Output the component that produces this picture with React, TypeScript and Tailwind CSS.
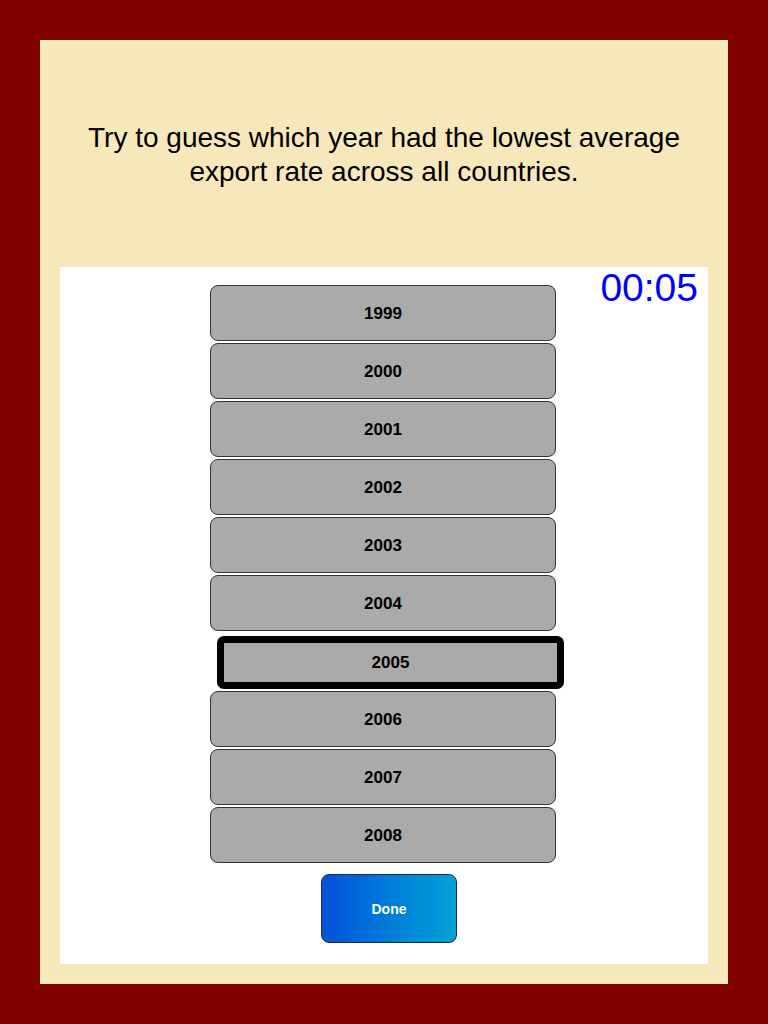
import React from "react";

const years = ["1999", "2000", "2001", "2002", "2003", "2004", "2005", "2006", "2007", "2008"];
const selected = "2005";

export default function App() {
	return (
		<div className="h-[1024px] w-[768px] bg-[#800000] p-[40px]" style={{fontFamily: '"Liberation Sans", Arial, sans-serif'}}>
			<div className="flex h-full flex-col bg-[#f7e8bc] px-[20px] pb-[20px]">
				<div className="flex h-[227px] items-center justify-center pt-[2px]">
					<p className="text-center text-[28px] leading-[34px] text-black">
						Try to guess which year had the lowest average<br/>export rate across all countries.
					</p>
				</div>

				<div className="relative flex flex-1 flex-col items-center bg-white pt-[18px]">
					<div className="absolute right-[10px] top-[-2px] text-[39px] leading-[46px] text-[#0000ff]">00:05</div>

					<div className="mr-[2px] flex w-[346px] flex-col gap-[2px]">
						{years.map((y) => y === selected ? (
							<div key={y}
								 className="ml-[7px] mt-[3px] flex h-[53px] w-[347px] items-center justify-center rounded-[7px] border-[7px] border-black bg-[#aaaaaa] text-[17px] font-bold text-black">
								{y}
							</div>
						) : (
							<div key={y}
								 className="flex h-[56px] items-center justify-center rounded-[8px] border border-[#333333] bg-[#aaaaaa] pt-[2px] text-[17px] font-bold text-black">
								{y}
							</div>
						))}
					</div>

					<div className="mr-[2px] mt-[11px] pl-[12px]">
						<div className="flex h-[69px] w-[136px] items-center justify-center rounded-[8px] border border-[#1a2a55] bg-gradient-to-r from-[#0a4fdb] to-[#0aa2d4] pt-[2px] text-[14px] font-bold text-white">
							Done
						</div>
					</div>
				</div>
			</div>
		</div>
	);
}
